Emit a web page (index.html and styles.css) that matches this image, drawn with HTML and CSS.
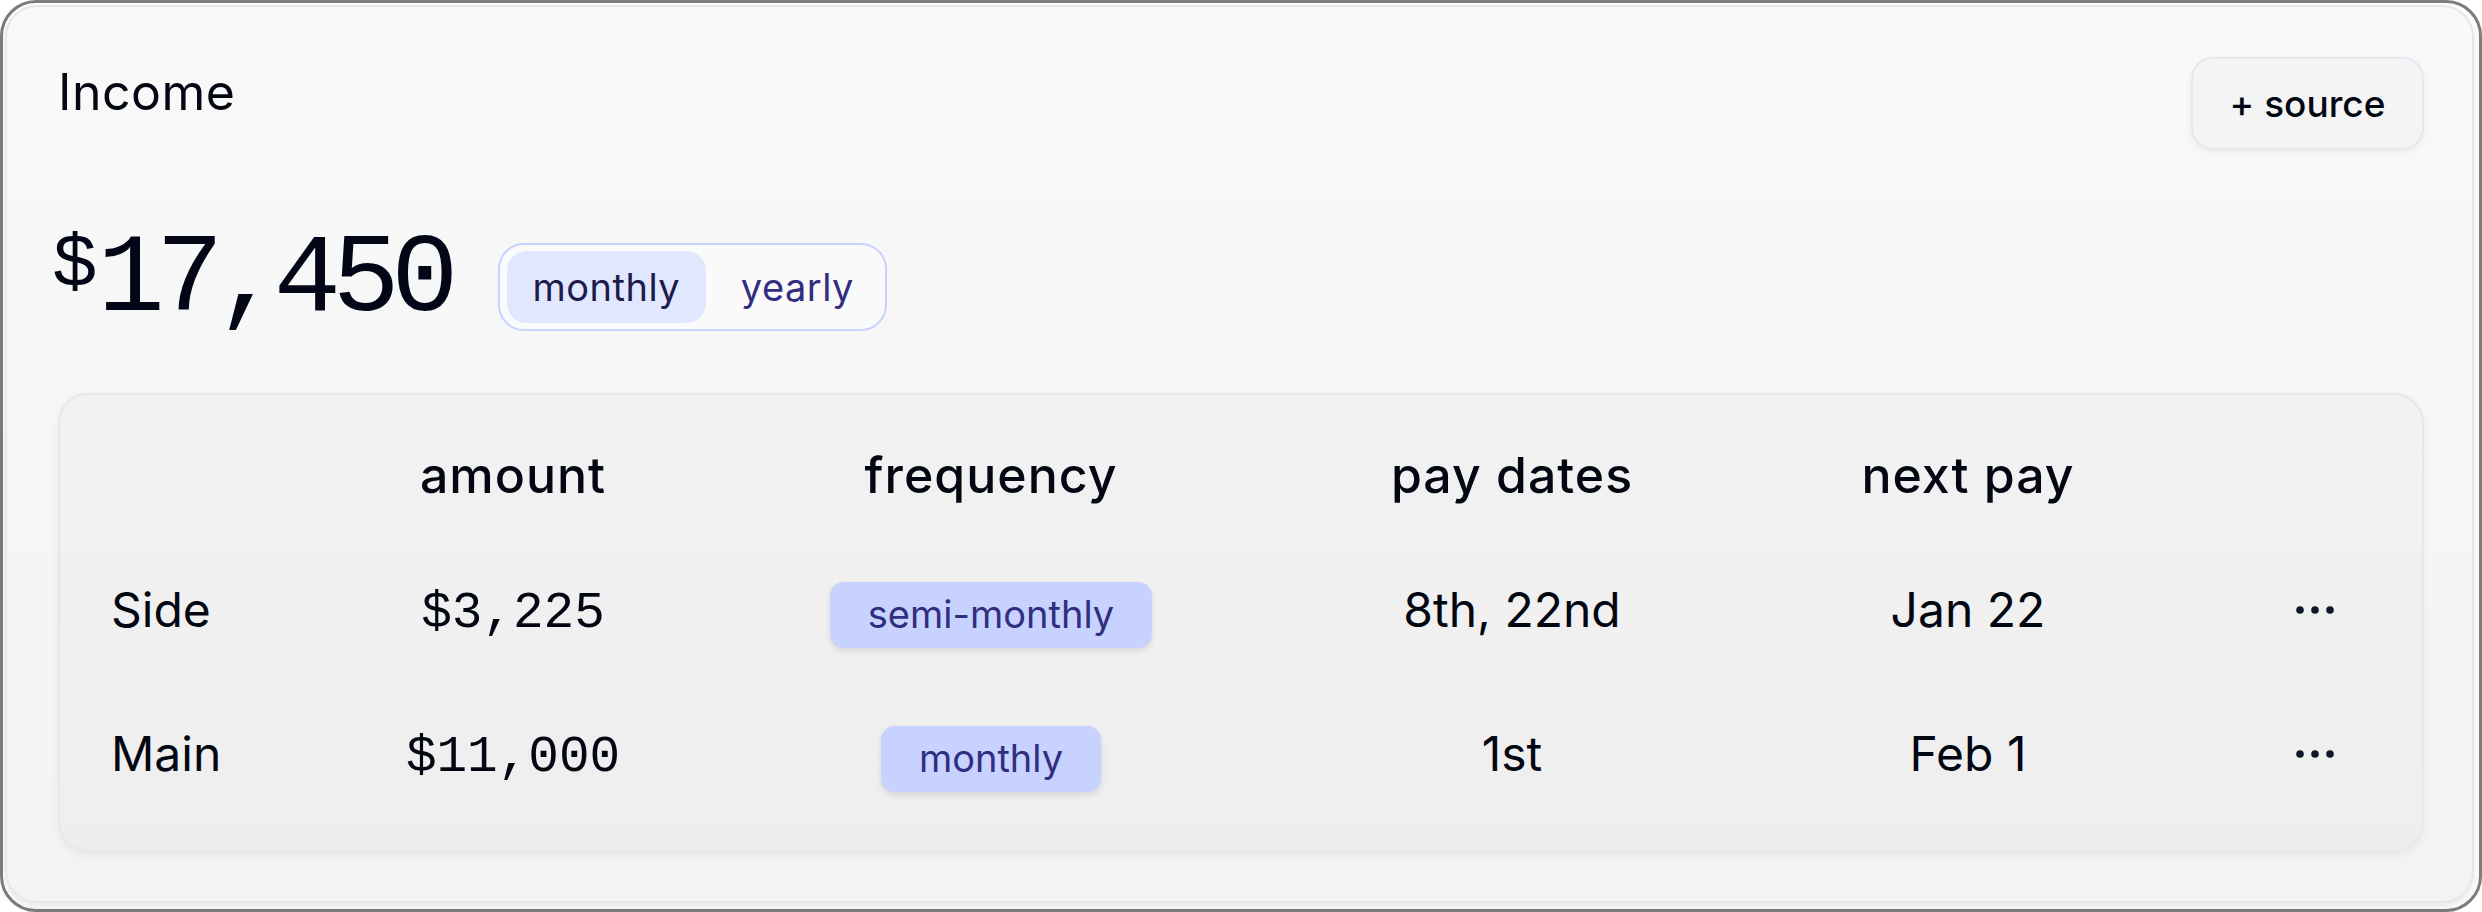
FILE: index.html
```html
<!DOCTYPE html>
<html lang="en">
<head>
<meta charset="utf-8">
<title>Income</title>
<link rel="stylesheet" href="styles.css">
</head>
<body>
<div class="frame">
  <section class="card">
    <header class="card-head">
      <h2 class="title">Income</h2>
      <button class="add-btn" type="button">+ source</button>
    </header>
    <div class="total-row">
      <div class="total"><span class="cur">$</span><span class="num">17,450</span></div>
      <div class="toggle">
        <span class="opt opt-monthly active">monthly</span>
        <span class="opt opt-yearly">yearly</span>
      </div>
    </div>
    <div class="table">
      <div class="th"></div>
      <div class="th">amount</div>
      <div class="th">frequency</div>
      <div class="th">pay dates</div>
      <div class="th">next pay</div>
      <div class="th"></div>

      <div class="td label">Side</div>
      <div class="td mono">$3,225</div>
      <div class="td"><span class="pill">semi-monthly</span></div>
      <div class="td">8th, 22nd</div>
      <div class="td">Jan 22</div>
      <div class="td more"><svg width="38" height="8" viewBox="0 0 38 8"><circle cx="4" cy="4" r="3.8"/><circle cx="19" cy="4" r="3.8"/><circle cx="34" cy="4" r="3.8"/></svg></div>

      <div class="td label">Main</div>
      <div class="td mono">$11,000</div>
      <div class="td"><span class="pill">monthly</span></div>
      <div class="td">1st</div>
      <div class="td">Feb 1</div>
      <div class="td more"><svg width="38" height="8" viewBox="0 0 38 8"><circle cx="4" cy="4" r="3.8"/><circle cx="19" cy="4" r="3.8"/><circle cx="34" cy="4" r="3.8"/></svg></div>
    </div>
  </section>
</div>
</body>
</html>
```

FILE: styles.css
```css
html, body {
  margin: 0;
  padding: 0;
  background: #ffffff;
}

body {
  font-family: Inter, "Liberation Sans", sans-serif;
  color: #030712;
}

.frame {
  box-sizing: border-box;
  width: 2482px;
  height: 912px;
  border: 3px solid #7d7d7d;
  border-radius: 36px;
  padding: 2px 5px 6px 2px;
  background: #ffffff;
  display: flex;
}

.card {
  flex: 1;
  box-sizing: border-box;
  border: 2px solid #e2e8f0;
  border-radius: 32px;
  background: linear-gradient(#f9f9f9, #f3f3f3);
  box-shadow: 0 4px 8px rgba(0, 0, 0, 0.10);
  padding: 50px 48px 0 51px;
}

.card-head {
  display: flex;
  justify-content: space-between;
  align-items: flex-start;
}

.title {
  margin: 5px 0 0;
  font-size: 50px;
  font-weight: 400;
  line-height: 1.2;
  letter-spacing: 0.5px;
}

.add-btn {
  box-sizing: border-box;
  height: 93px;
  width: 233px;
  padding: 0;
  font-family: Inter, "Liberation Sans", sans-serif;
  font-size: 37px;
  font-weight: 500;
  color: #030712;
  background: #f4f4f5;
  border: 2px solid #e2e8f0;
  border-radius: 22px;
  box-shadow: 0 2px 6px rgba(0, 0, 0, 0.06);
}

.total-row {
  display: flex;
  align-items: flex-start;
  gap: 48px;
  margin-top: 75px;
}

.total {
  display: flex;
  align-items: flex-start;
  font-family: "Liberation Mono", monospace;
  font-feature-settings: "zero" 1;
  color: #020617;
  margin-left: -6px;
}

.cur {
  font-size: 76px;
  line-height: 1;
  margin-top: 3px;
}

.num {
  font-size: 112px;
  line-height: 1;
  letter-spacing: -8.5px;
}

.toggle {
  box-sizing: border-box;
  height: 88px;
  margin-top: 18px;
  display: flex;
  gap: 11px;
  padding: 6px 7px;
  border: 2px solid #c7d2fe;
  border-radius: 26px;
  background: #fafafa;
}

.opt {
  display: flex;
  align-items: center;
  justify-content: center;
  height: 72px;
  border-radius: 20px;
  font-size: 38px;
  letter-spacing: 0.5px;
  color: #312e81;
}

.opt-monthly { width: 199px; }
.opt-yearly { width: 161px; }

.opt.active {
  background: #e0e7ff;
  color: #1e1b4b;
}

.table {
  margin-top: 56px;
  box-sizing: border-box;
  border: 2px solid #e2e8f0;
  border-radius: 30px;
  background: linear-gradient(#f2f2f2, #eeeeee);
  box-shadow: 0 3px 8px rgba(0, 0, 0, 0.05);
  padding: 33px 51px 24px;
  display: grid;
  grid-template-columns: 189px 426px 530px 512px 400px 1fr;
  grid-template-rows: 110px 144px 144px;
}

.th {
  align-self: start;
  height: 94px;
  display: flex;
  align-items: center;
  justify-content: center;
  font-size: 50px;
  font-weight: 500;
  line-height: 1.2;
  letter-spacing: 1px;
}

.td {
  display: flex;
  align-items: center;
  justify-content: center;
  font-size: 48px;
  line-height: 1.2;
}

.td.label {
  justify-content: flex-start;
}

.td.mono {
  font-family: "Liberation Mono", monospace;
  font-feature-settings: "zero" 1;
  font-size: 51px;
  padding-top: 8px;
}

.pill {
  display: inline-flex;
  align-items: center;
  height: 66px;
  padding: 0 38px;
  margin-top: 10px;
  border-radius: 14px;
  background: #c7d2fe;
  color: #312e81;
  font-size: 38px;
  box-shadow: 0 3px 6px rgba(0, 0, 0, 0.10);
}

.td.more {
  justify-content: flex-end;
  padding-right: 37px;
}

.more svg {
  fill: #0f172a;
}
```
